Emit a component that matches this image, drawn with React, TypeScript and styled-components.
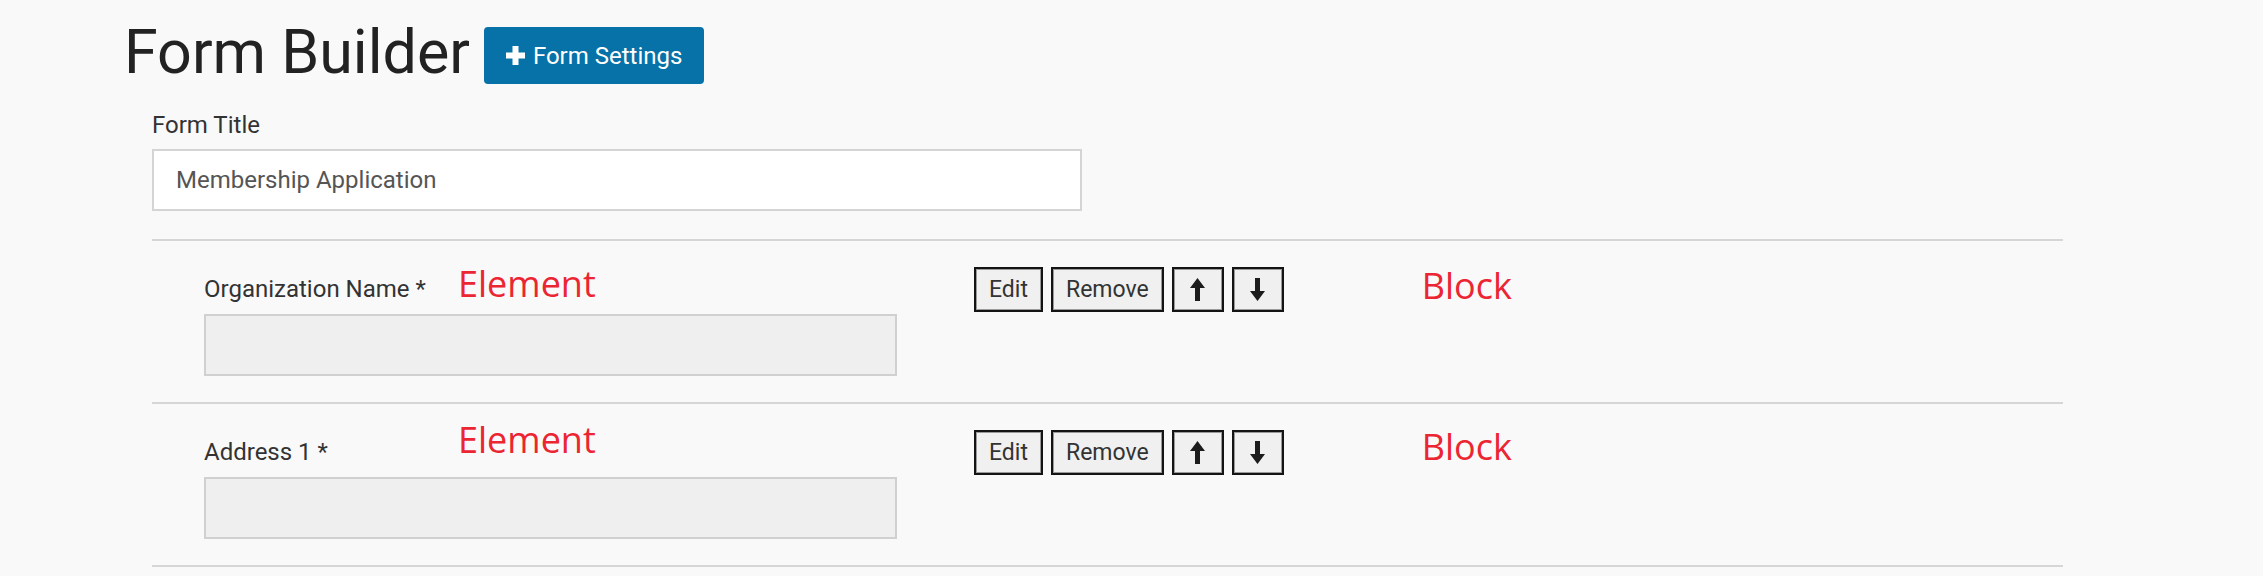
import styled, { createGlobalStyle } from 'styled-components';

const GlobalStyle = createGlobalStyle`
  html, body {
    margin: 0;
    background: #f9f9f9;
    font-family: Roboto, "Liberation Sans", sans-serif;
    color: #333;
  }
`;

// noteLift: the red annotations sit a little higher on the second row
const fields = [
  { label: 'Organization Name *', noteLift: 0, blockLift: 0 },
  { label: 'Address 1 *', noteLift: 7, blockLift: 2 },
];

const Page = styled.div`
  padding: 21px 0 0 124px;
`;

const Header = styled.div`
  display: flex;
  align-items: flex-start;
  gap: 14px;
`;

const Title = styled.h1`
  margin: 0;
  font-size: 61px;
  line-height: 63px;
  font-weight: 400;
  color: #222;
`;

const SettingsButton = styled.button`
  display: flex;
  align-items: center;
  gap: 8px;
  height: 57px;
  margin-top: 6px;
  padding: 0 22px;
  border: none;
  border-radius: 4px;
  background: #0672a8;
  color: #fff;
  font-family: Roboto, "Liberation Sans", sans-serif;
  font-size: 24px;
`;

const FormArea = styled.div`
  width: 1911px;
  margin: 25px 0 0 28px;
`;

const TitleGroup = styled.div`
  padding-bottom: 28px;
  border-bottom: 2px solid #d6d6d6;
`;

const Label = styled.label`
  display: block;
  font-size: 24px;
  line-height: 33px;
  color: #333;
`;

const TextInput = styled.div`
  box-sizing: border-box;
  width: 930px;
  height: 62px;
  margin-top: 7px;
  padding-left: 22px;
  display: flex;
  align-items: center;
  background: #fff;
  border: 2px solid #d4d4d4;
  font-size: 24px;
  color: #555;
`;

const Row = styled.div`
  display: flex;
  align-items: flex-start;
  padding: 26px 0 26px 52px;
  border-bottom: 2px solid #d6d6d6;
`;

const ElementCol = styled.div`
  width: 693px;
  margin-right: 77px;
`;

const LabelRow = styled.div`
  display: flex;
  align-items: baseline;
  height: 34px;
`;

const FieldLabel = styled(Label)`
  width: 254px;
`;

const Note = styled.span<{ $lift?: number }>`
  position: relative;
  top: ${(p) => -(p.$lift ?? 0)}px;
  font-family: "Open Sans", sans-serif;
  font-size: 36px;
  line-height: 34px;
  color: #ec2533;
`;

const DisabledInput = styled.div`
  box-sizing: border-box;
  height: 62px;
  margin-top: 13px;
  background: #efefef;
  border: 2px solid #d0d0d0;
`;

const Actions = styled.div`
  display: flex;
  gap: 8px;
  align-items: flex-start;
`;

const ActionButton = styled.button`
  box-sizing: border-box;
  height: 45px;
  min-width: 52px;
  padding: 0 13px;
  display: flex;
  align-items: center;
  justify-content: center;
  background: #f0f0f0;
  border: 2px solid #141414;
  box-shadow: inset 0 0 0 1px #9a9a9a;
  font-family: Roboto, "Liberation Sans", sans-serif;
  font-size: 23px;
  color: #333;
`;

const BlockNote = styled(Note)`
  margin-left: 138px;
  margin-top: 2px;
`;

const PlusIcon = () => (
  <svg width="19" height="19" viewBox="0 0 19 19">
    <rect x="6.5" y="0" width="6" height="19" fill="#fff" />
    <rect x="0" y="6.5" width="19" height="6" fill="#fff" />
  </svg>
);

const Arrow = ({ down }: { down?: boolean }) => (
  <svg
    width="15"
    height="23"
    viewBox="0 0 15 23"
    style={down ? { transform: 'rotate(180deg)' } : undefined}
  >
    <path d="M7.5 0 L15 10 L10 10 L10 23 L5 23 L5 10 L0 10 Z" fill="#1c1c1c" />
  </svg>
);

export default function App() {
  return (
    <>
      <GlobalStyle />
      <Page>
        <Header>
          <Title>Form Builder</Title>
          <SettingsButton>
            <PlusIcon />
            Form Settings
          </SettingsButton>
        </Header>
        <FormArea>
          <TitleGroup>
            <Label>Form Title</Label>
            <TextInput>Membership Application</TextInput>
          </TitleGroup>
          {fields.map((f) => (
            <Row key={f.label}>
              <ElementCol>
                <LabelRow>
                  <FieldLabel>{f.label}</FieldLabel>
                  <Note $lift={f.noteLift}>Element</Note>
                </LabelRow>
                <DisabledInput />
              </ElementCol>
              <Actions>
                <ActionButton>Edit</ActionButton>
                <ActionButton>Remove</ActionButton>
                <ActionButton>
                  <Arrow />
                </ActionButton>
                <ActionButton>
                  <Arrow down />
                </ActionButton>
              </Actions>
              <BlockNote $lift={f.blockLift}>Block</BlockNote>
            </Row>
          ))}
        </FormArea>
      </Page>
    </>
  );
}
